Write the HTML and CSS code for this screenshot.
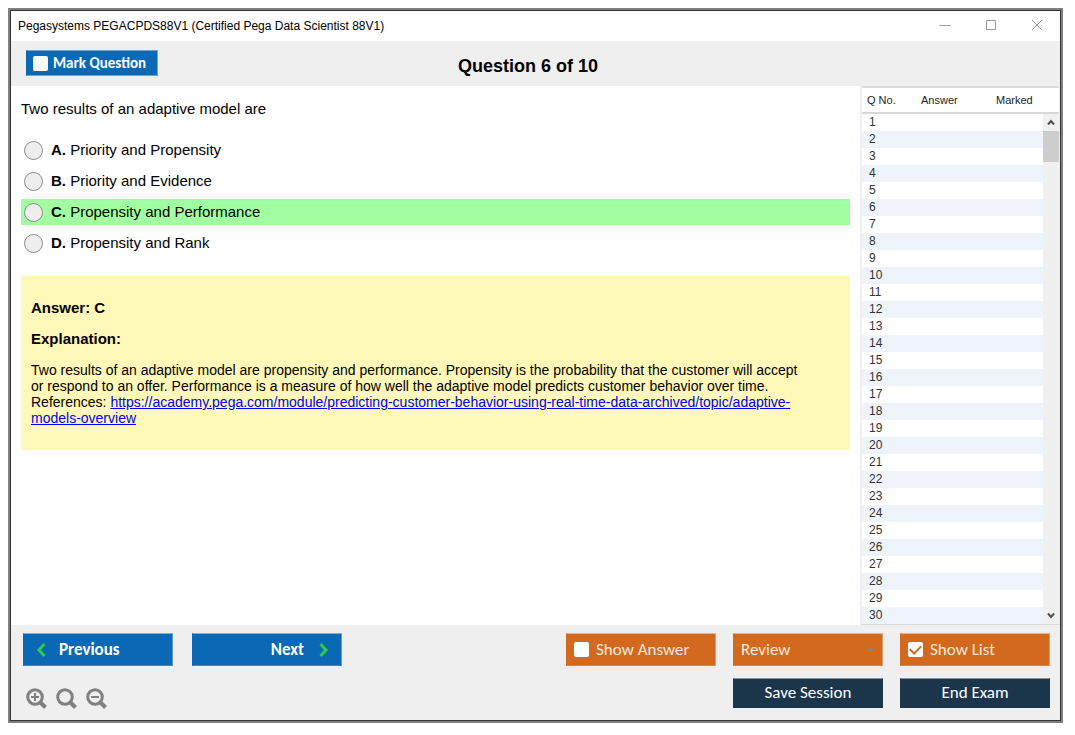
FILE: index.html
```
<!DOCTYPE html>
<html lang="en">
<head>
<meta charset="utf-8">
<title>Pegasystems PEGACPDS88V1 (Certified Pega Data Scientist 88V1)</title>
<link rel="stylesheet" href="styles.css">
</head>
<body>
<div class="window">
  <header class="titlebar">
    <span class="titlebar-text">Pegasystems PEGACPDS88V1 (Certified Pega Data Scientist 88V1)</span>
    <div class="window-controls">
      <button type="button" aria-label="Minimize"><svg width="12" height="12" viewBox="0 0 12 12"><path d="M0.500 6.500h11"/></svg></button>
      <button type="button" aria-label="Maximize"><svg width="11" height="11" viewBox="0 0 11 11"><path d="M.5.500h9v9h-9z"/></svg></button>
      <button type="button" aria-label="Close"><svg width="12" height="12" viewBox="0 0 12 12"><path d="M1 1l10 10M11 1L1 11"/></svg></button>
    </div>
  </header>

  <div class="question-bar">
    <label class="toggle toggle-mark"><input type="checkbox" class="check">Mark Question</label>
    <h1 class="question-title">Question 6 of 10</h1>
  </div>

  <div class="workspace">
    <main class="content">
      <p class="question">Two results of an adaptive model are</p>
      <div class="options" role="radiogroup" aria-label="Options">
        <label class="option"><input type="radio" name="answer"><span><b>A.</b> Priority and Propensity</span></label>
        <label class="option"><input type="radio" name="answer"><span><b>B.</b> Priority and Evidence</span></label>
        <label class="option option-correct"><input type="radio" name="answer"><span><b>C.</b> Propensity and Performance</span></label>
        <label class="option"><input type="radio" name="answer"><span><b>D.</b> Propensity and Rank</span></label>
      </div>
      <section class="explanation">
        <p class="explanation-heading">Answer: C</p>
        <p class="explanation-heading">Explanation:</p>
        <p>Two results of an adaptive model are propensity and performance. Propensity is the probability that the customer will accept or respond to an offer. Performance is a measure of how well the adaptive model predicts customer behavior over time.<br>References: <a href="https://academy.pega.com/module/predicting-customer-behavior-using-real-time-data-archived/topic/adaptive-models-overview">https://academy.pega.com/module/predicting-customer-behavior-using-real-time-data-archived/topic/adaptive-models-overview</a></p>
      </section>
    </main>

    <aside class="list">
      <table class="list-table">
        <thead><tr><th class="col-number">Q No.</th><th class="col-answer">Answer</th><th>Marked</th></tr></thead>
        <tbody>
          <tr><td>1</td><td></td><td></td></tr>
          <tr><td>2</td><td></td><td></td></tr>
          <tr><td>3</td><td></td><td></td></tr>
          <tr><td>4</td><td></td><td></td></tr>
          <tr><td>5</td><td></td><td></td></tr>
          <tr><td>6</td><td></td><td></td></tr>
          <tr><td>7</td><td></td><td></td></tr>
          <tr><td>8</td><td></td><td></td></tr>
          <tr><td>9</td><td></td><td></td></tr>
          <tr><td>10</td><td></td><td></td></tr>
          <tr><td>11</td><td></td><td></td></tr>
          <tr><td>12</td><td></td><td></td></tr>
          <tr><td>13</td><td></td><td></td></tr>
          <tr><td>14</td><td></td><td></td></tr>
          <tr><td>15</td><td></td><td></td></tr>
          <tr><td>16</td><td></td><td></td></tr>
          <tr><td>17</td><td></td><td></td></tr>
          <tr><td>18</td><td></td><td></td></tr>
          <tr><td>19</td><td></td><td></td></tr>
          <tr><td>20</td><td></td><td></td></tr>
          <tr><td>21</td><td></td><td></td></tr>
          <tr><td>22</td><td></td><td></td></tr>
          <tr><td>23</td><td></td><td></td></tr>
          <tr><td>24</td><td></td><td></td></tr>
          <tr><td>25</td><td></td><td></td></tr>
          <tr><td>26</td><td></td><td></td></tr>
          <tr><td>27</td><td></td><td></td></tr>
          <tr><td>28</td><td></td><td></td></tr>
          <tr><td>29</td><td></td><td></td></tr>
          <tr><td>30</td><td></td><td></td></tr>
        </tbody>
      </table>
      <div class="scroll-column">
        <div class="scrollbar">
          <button type="button" aria-label="Scroll up"><svg width="8" height="7" viewBox="0 0 8 7"><path d="M1 5.500L4 2l3 3.500"/></svg></button>
          <div class="scroll-thumb"></div>
          <button type="button" class="scroll-down" aria-label="Scroll down"><svg width="8" height="7" viewBox="0 0 8 7"><path d="M1 1.500L4 5l3-3.500"/></svg></button>
        </div>
      </div>
    </aside>
  </div>

  <footer class="footer">
    <div class="footer-row">
      <div class="group group-nav">
        <button type="button" class="btn btn-blue btn-prev"><svg width="11" height="14" viewBox="0 0 11 14"><path d="M8.500 1L3 7l5.500 6"/></svg>Previous</button>
        <button type="button" class="btn btn-blue btn-next">Next<svg width="11" height="14" viewBox="0 0 11 14"><path d="M2.500 1L8 7l-5.500 6"/></svg></button>
      </div>
      <div class="group">
        <label class="btn btn-orange"><input type="checkbox" class="check">Show Answer</label>
        <button type="button" class="btn btn-orange btn-menu" aria-haspopup="menu">Review<svg width="10" height="5" viewBox="0 0 10 5"><path d="M5 0l5 5H0z"/></svg></button>
        <label class="btn btn-orange"><input type="checkbox" class="check" checked>Show List</label>
      </div>
    </div>
    <div class="footer-row">
      <div class="zoom-tools">
        <button type="button" aria-label="Zoom in"><svg width="22" height="22" viewBox="0 -2 22 22"><circle cx="9" cy="9" r="7.300"/><path class="handle" d="M14 14l5.500 5.500"/><path class="sign" d="M5 9h8M9 5v8"/></svg></button>
        <button type="button" aria-label="Reset zoom"><svg width="22" height="22" viewBox="0 -2 22 22"><circle cx="9" cy="9" r="7.300"/><path class="handle" d="M14 14l5.500 5.500"/></svg></button>
        <button type="button" aria-label="Zoom out"><svg width="22" height="22" viewBox="0 -2 22 22"><circle cx="9" cy="9" r="7.300"/><path class="handle" d="M14 14l5.500 5.500"/><path class="sign" d="M5 9h8"/></svg></button>
      </div>
      <div class="group">
        <button type="button" class="btn btn-navy">Save Session</button>
        <button type="button" class="btn btn-navy">End Exam</button>
      </div>
    </div>
  </footer>
</div>
</body>
</html>
```
FILE: styles.css
```
* { box-sizing: border-box; }

body {
  margin: 0;
  padding: 8px 12px 12px 8px;
  min-height: 100vh;
  display: flex;
  background: #fff;
  color: #000;
  font-family: "Liberation Sans", Arial, sans-serif;
  font-size: 15px;
  line-height: 16px;
}

button {
  margin: 0;
  padding: 0;
  border: 0;
  background: none;
  color: inherit;
  font: inherit;
}

svg { display: block; fill: none; overflow: visible; }

.window {
  flex: 1;
  min-width: 0;
  display: flex;
  flex-direction: column;
  border: 2px solid #808080;
  outline: 1px solid #333;
  outline-offset: -3px;
  padding: 1px;
  background: #efefef;
}

.titlebar {
  display: flex;
  justify-content: space-between;
  align-items: center;
  height: 30px;
  padding-left: 7px;
  background: #fff;
  font-size: 12px;
}

.window-controls { display: flex; height: 28px; align-self: flex-start; }
.window-controls button {
  width: 46px;
  display: grid;
  place-items: center;
}
.window-controls svg { stroke: #999; }

.question-bar {
  display: grid;
  grid-template-columns: 1fr auto 1fr;
  align-items: center;
  height: 45px;
  padding: 0 30px 0 15px;
}

.toggle {
  justify-self: start;
  display: flex;
  align-items: center;
  gap: 5px;
  height: 26px;
  padding: 0 11px 0 6px;
  border: 1px solid #6fa5d2;
  border-left-color: #0a68b5;
  background: #0a68b5;
  color: #fff;
  font-family: Carlito, Lato, sans-serif;
  font-size: 15px;
  font-weight: 700;
}
.toggle-mark { margin-bottom: 1px; }

.check {
  appearance: none;
  flex: none;
  display: grid;
  place-items: center;
  width: 15px;
  height: 15px;
  margin: 0;
  border-radius: 2px;
  background: #fff;
}
.check:checked::before {
  content: "";
  width: 9px;
  height: 5px;
  margin-bottom: 3px;
  border: solid #d2691e;
  border-width: 0 0 2px 2px;
  transform: rotate(-45deg);
}

.question-title {
  margin: 0;
  padding-top: 4px;
  font-size: 18px;
  line-height: 20px;
}

.workspace { flex: 1; display: flex; background: #fff; }

.content { flex: 1; min-width: 0; padding: 15px 10px; }

.question { margin: 0 0 20px; }

.options { display: grid; gap: 5px; margin-bottom: 20px; }

.option {
  display: flex;
  align-items: center;
  gap: 8px;
  height: 26px;
  padding-left: 3px;
}
.option-correct { background: #a1ffa1; }
.option input {
  appearance: none;
  width: 19px;
  height: 19px;
  margin: 0;
  border: 1px solid #8c8c8c;
  border-radius: 50%;
  background: #eee;
}
.option input:checked { background: #0a68b5; }

.explanation {
  padding: 24px 44px 24px 10px;
  background: #fff8b9;
  font-size: 14px;
}
.explanation p { margin: 0 0 15px; }
.explanation p:last-child { margin-bottom: 0; }
.explanation .explanation-heading { font-size: 15px; font-weight: 700; }
.explanation a { color: #00e; text-decoration: underline; }

.list {
  flex: none;
  display: flex;
  width: 200px;
  border: solid #f0f0f0;
  border-width: 0 1px 0 2px;
  border-bottom: 1px solid #d9d9d9;
}

.list-table {
  flex: 1;
  align-self: flex-start;
  border-collapse: separate;
  border-spacing: 0;
  table-layout: fixed;
  color: #333;
  font-size: 12px;
  line-height: 17px;
}
.list-table th {
  height: 28px;
  padding: 0 0 0 5px;
  border-top: 2px solid #dcdcdc;
  border-bottom: 2px solid #d8d8d8;
  color: #222;
  font-size: 11px;
  font-weight: 400;
  text-align: left;
}
.list-table .col-number { width: 54px; }
.list-table .col-answer { width: 75px; }
.list-table td { height: 17px; padding: 0 0 0 7px; }
.list-table tbody tr:nth-child(even) { background: #eef4f9; }

.scroll-column {
  width: 16px;
  display: flex;
  flex-direction: column;
  border-top: 2px solid #dcdcdc;
}
.scroll-column::before {
  content: "";
  height: 24px;
  border-bottom: 2px solid #d8d8d8;
}
.scrollbar {
  flex: 1;
  display: flex;
  flex-direction: column;
  background: #f0f0f0;
}
.scrollbar button { height: 17px; display: grid; place-items: center; }
.scrollbar svg { stroke: #505050; stroke-width: 2; }
.scroll-thumb { height: 31px; background: #cdcdcd; }
.scrollbar .scroll-down { margin-top: auto; }

.footer { display: grid; gap: 12px; padding: 8px 10px 12px 12px; }
.footer-row { display: flex; justify-content: space-between; }
.group { display: flex; gap: 17px; }
.group-nav { gap: 19px; }

.btn {
  display: flex;
  align-items: center;
  gap: 7px;
  width: 150px;
  height: 33px;
  padding: 0 7px;
  border: 1px solid transparent;
  color: #fff;
  font-family: Carlito, Lato, sans-serif;
  font-size: 17px;
}
.btn-blue {
  border-color: #7fb0d8 #5f9ccf #3f86c4 #0a68b5;
  background: #0a68b5;
  font-weight: 700;
}
.btn-blue svg { stroke: #2ecc40; stroke-width: 3; }
.btn-prev { gap: 12px; padding-left: 12px; }
.btn-next { justify-content: flex-end; gap: 14px; padding-right: 12px; }
.btn-orange {
  border-color: #e0b493 #e0a070 #d9824a #d2691e;
  background: #d2691e;
  color: #fbe9dc;
}
.btn-menu { justify-content: space-between; }
.btn-menu svg { fill: #8a8378; }
.btn-navy {
  justify-content: center;
  height: 30px;
  border-color: #8895a0 #1b364b #1b364b #1b364b;
  background: #1b364b;
}

.zoom-tools { display: flex; align-items: flex-end; gap: 8px; padding-left: 3px; }
.zoom-tools svg { stroke: #808080; stroke-width: 3; }
.zoom-tools .handle { stroke-width: 4; }
.zoom-tools .sign { stroke-width: 2; }
```
